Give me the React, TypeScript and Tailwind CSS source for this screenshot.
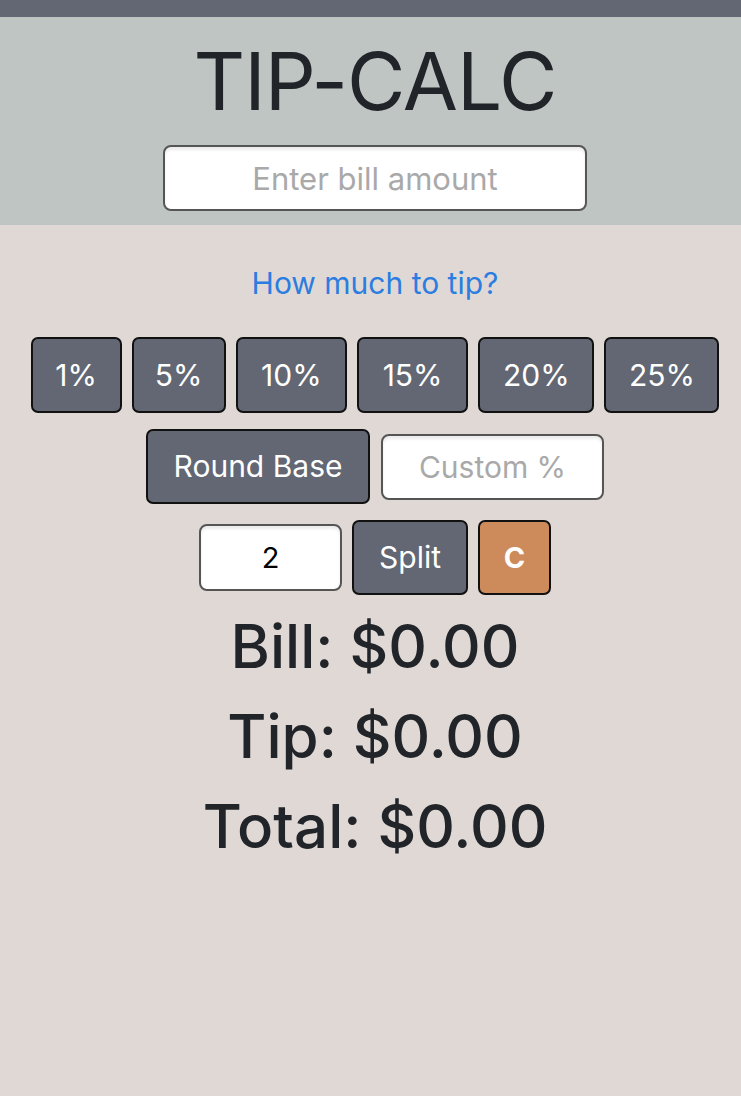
import React from "react";

const font = { fontFamily: "Inter, 'Noto Sans', 'Liberation Sans', sans-serif" };

export default function App() {
  const tips = [
    { label: "1%", w: "w-[91px]" },
    { label: "5%", w: "w-[94px]" },
    { label: "10%", w: "w-[111px]" },
    { label: "15%", w: "w-[111px]" },
    { label: "20%", w: "w-[116px]" },
    { label: "25%", w: "w-[115px]" },
  ];
  return (
    <div className="min-h-[1096px] bg-[#e0d8d5]" style={font}>
      <div className="h-[17px] bg-[#626773]" />
      <div className="h-[208px] bg-[#bfc5c3] pl-[9px] flex flex-col items-center">
        <h1 className="mt-[18px] text-[80px] leading-[92px] font-normal text-[#212529] tracking-[-1px]">TIP-CALC</h1>
        <input
          className="mt-[18px] w-[424px] h-[66px] rounded-[8px] border-2 border-[#555] bg-white text-center text-[31px] text-[#333] placeholder:text-[#a9a9a9] shadow-[inset_0_3px_3px_rgba(0,0,0,0.08)] outline-none"
          placeholder="Enter bill amount"
        />
      </div>
      <div className="pl-[9px] flex flex-col items-center">
        <div className="mt-[39px] text-[30px] leading-[38px] text-[#2b7de0]">How much to tip?</div>
        <div className="mt-[35px] flex gap-[10.2px]">
          {tips.map((t) => (
            <button
              key={t.label}
              className={`${t.w} h-[76px] rounded-[7px] border-2 border-[#111] bg-[#626773] text-white text-[30px]`}
            >
              {t.label}
            </button>
          ))}
        </div>
        <div className="mt-[16px] flex items-center gap-[11px]">
          <button className="w-[224px] h-[75px] rounded-[7px] border-2 border-[#111] bg-[#626773] text-white text-[30px]">
            Round Base
          </button>
          <input
            className="w-[223px] h-[66px] rounded-[8px] border-2 border-[#555] bg-white text-center text-[30px] placeholder:text-[#a9a9a9] shadow-[inset_0_3px_3px_rgba(0,0,0,0.08)] outline-none"
            placeholder="Custom %"
          />
        </div>
        <div className="mt-[16px] flex items-center gap-[10px]">
          <input
            className="w-[143px] h-[67px] rounded-[8px] border-2 border-[#555] bg-white text-center text-[29px] text-black shadow-[inset_0_3px_3px_rgba(0,0,0,0.08)] outline-none"
            defaultValue="2"
          />
          <button className="w-[116px] h-[75px] rounded-[7px] border-2 border-[#111] bg-[#626773] text-white text-[30px]">
            Split
          </button>
          <button className="w-[73px] h-[75px] rounded-[7px] border-2 border-[#111] bg-[#cd8a5a] text-white text-[29px] font-bold">
            C
          </button>
        </div>
        <div className="mt-[6px] flex flex-col items-center text-[#212529] text-[60px] leading-[90px] font-medium">
          <div>Bill: $0.00</div>
          <div>Tip: $0.00</div>
          <div>Total: $0.00</div>
        </div>
      </div>
    </div>
  );
}
